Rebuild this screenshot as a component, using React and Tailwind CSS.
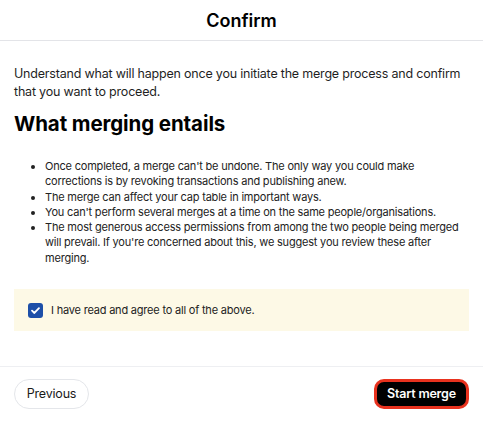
export default function App() {
  return (
    <div className="w-[483px] h-[436px] bg-white flex flex-col text-[#1a1a1a]" style={{ fontFamily: 'Inter, "Noto Sans", sans-serif' }}>
      <div className="h-[41px] border-b border-[#e3e4e8] flex items-center justify-center">
        <h1 className="text-[18px] font-semibold text-black">Confirm</h1>
      </div>
      <div className="px-[14px] pt-[24px] flex-1">
        <p className="text-[12.5px] tracking-[-0.2px] leading-[18px] text-[#1f1f1f]">
          Understand what will happen once you initiate the merge process and confirm that you want to proceed.
        </p>
        <h2 className="text-[20.5px] font-bold tracking-[-0.1px] text-black mt-[11px] leading-[24px]">What merging entails</h2>
        <ul className="list-disc pl-[31px] mt-[23px] text-[11px] tracking-[-0.2px] leading-[15.3px] text-[#222]">
          <li>Once completed, a merge can't be undone. The only way you could make corrections is by revoking transactions and publishing anew.</li>
          <li>The merge can affect your cap table in important ways.</li>
          <li>You can't perform several merges at a time on the same people/organisations.</li>
          <li>The most generous access permissions from among the two people being merged will prevail. If you're concerned about this, we suggest you review these after merging.</li>
        </ul>
        <div className="mt-[23px] bg-[#fdf9e6] h-[42px] flex items-center px-[14px] gap-[8px]">
          <span className="w-[15px] h-[15px] rounded-[3px] bg-[#1d4fa8] flex items-center justify-center">
            <svg width="11" height="11" viewBox="0 0 12 12" fill="none"><path d="M2.2 6.2 L4.8 8.7 L9.8 3.4" stroke="white" strokeWidth="2" strokeLinecap="round" strokeLinejoin="round" /></svg>
          </span>
          <span className="text-[11px] tracking-[-0.2px] text-[#222]">I have read and agree to all of the above.</span>
        </div>
      </div>
      <div className="border-t border-[#eeeff2] h-[70px] flex items-start justify-between px-[14px] pt-[12px]">
        <button className="h-[30px] w-[75px] rounded-full border border-[#e4e6ea] text-[12.5px] tracking-[-0.2px] text-[#1a1a1a] bg-white">Previous</button>
        <button className="h-[30px] w-[95px] rounded-[10px] bg-black text-white text-[12.5px] tracking-[-0.2px] font-semibold border-[3px] border-[#e8321e]">Start merge</button>
      </div>
    </div>
  );
}
